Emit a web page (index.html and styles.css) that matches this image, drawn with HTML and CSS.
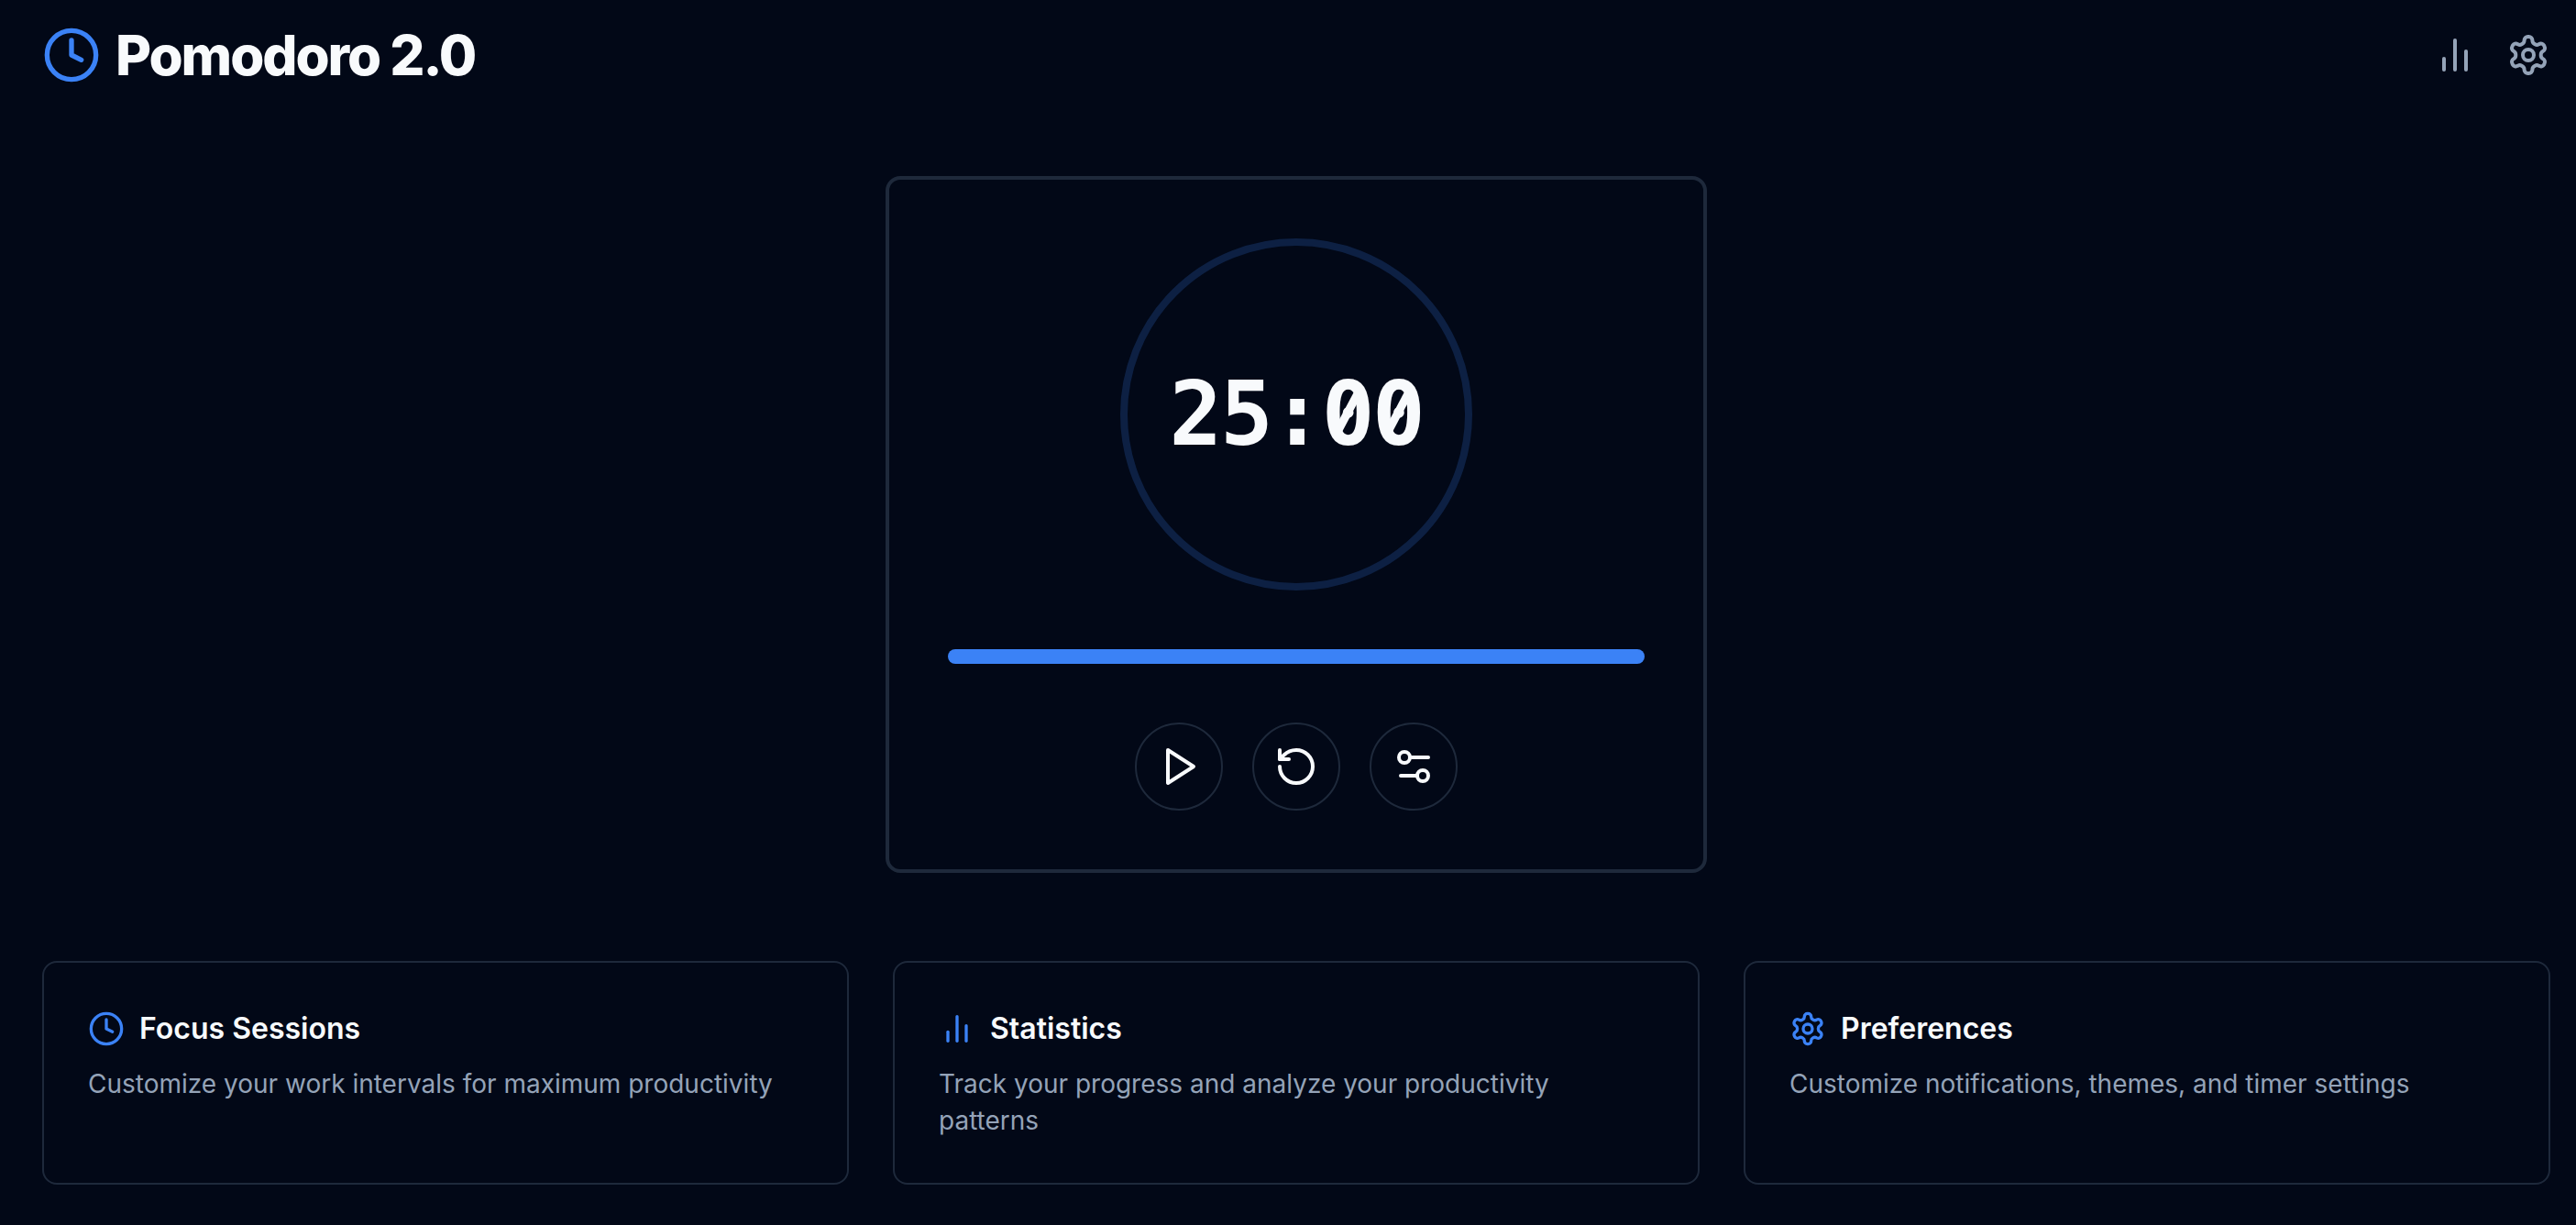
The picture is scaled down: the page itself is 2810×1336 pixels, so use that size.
FILE: index.html
```html
<!DOCTYPE html>
<html lang="en">
<head>
<meta charset="utf-8">
<title>Pomodoro 2.0</title>
<link rel="stylesheet" href="styles.css">
</head>
<body>
<svg class="sprite" width="0" height="0" aria-hidden="true">
  <symbol id="i-clock" viewBox="0 0 24 24"><circle cx="12" cy="12" r="10"/><polyline points="12 6 12 12 16 14"/></symbol>
  <symbol id="i-bars" viewBox="0 0 24 24"><line x1="18" x2="18" y1="20" y2="10"/><line x1="12" x2="12" y1="20" y2="4"/><line x1="6" x2="6" y1="20" y2="14"/></symbol>
  <symbol id="i-gear" viewBox="0 0 24 24"><path d="M12.22 2h-.44a2 2 0 0 0-2 2v.18a2 2 0 0 1-1 1.73l-.43.25a2 2 0 0 1-2 0l-.15-.08a2 2 0 0 0-2.73.73l-.22.38a2 2 0 0 0 .73 2.73l.15.1a2 2 0 0 1 1 1.72v.51a2 2 0 0 1-1 1.74l-.15.09a2 2 0 0 0-.73 2.73l.22.38a2 2 0 0 0 2.73.73l.15-.08a2 2 0 0 1 2 0l.43.25a2 2 0 0 1 1 1.73V20a2 2 0 0 0 2 2h.44a2 2 0 0 0 2-2v-.18a2 2 0 0 1 1-1.73l.43-.25a2 2 0 0 1 2 0l.15.08a2 2 0 0 0 2.73-.73l.22-.39a2 2 0 0 0-.73-2.73l-.15-.08a2 2 0 0 1-1-1.74v-.5a2 2 0 0 1 1-1.74l.15-.09a2 2 0 0 0 .73-2.73l-.22-.38a2 2 0 0 0-2.73-.73l-.15.08a2 2 0 0 1-2 0l-.43-.25a2 2 0 0 1-1-1.73V4a2 2 0 0 0-2-2z"/><circle cx="12" cy="12" r="3"/></symbol>
  <symbol id="i-play" viewBox="0 0 24 24"><polygon points="6 3 20 12 6 21 6 3"/></symbol>
  <symbol id="i-reset" viewBox="0 0 24 24"><path d="M3 12a9 9 0 1 0 9-9 9.75 9.75 0 0 0-6.74 2.74L3 8"/><path d="M3 3v5h5"/></symbol>
  <symbol id="i-sliders" viewBox="0 0 24 24"><path d="M20 7h-9"/><path d="M14 17H5"/><circle cx="17" cy="17" r="3"/><circle cx="7" cy="7" r="3"/></symbol>
</svg>

<header class="topbar">
  <div class="brand">
    <svg class="icon icon-logo"><use href="#i-clock"/></svg>
    <h1 class="brand-name">Pomodoro 2.0</h1>
  </div>
  <nav class="top-actions">
    <button class="plain-btn" type="button" aria-label="Statistics"><svg class="icon icon-md icon-muted"><use href="#i-bars"/></svg></button>
    <button class="plain-btn" type="button" aria-label="Settings"><svg class="icon icon-md icon-muted"><use href="#i-gear"/></svg></button>
  </nav>
</header>

<main class="content">
  <section class="timer-card">
    <div class="dial"><span class="time">25:<span class="zero">0</span><span class="zero">0</span></span></div>
    <div class="progress"></div>
    <div class="controls">
      <button class="round-btn" type="button" aria-label="Start"><svg class="icon icon-md"><use href="#i-play"/></svg></button>
      <button class="round-btn" type="button" aria-label="Reset"><svg class="icon icon-md"><use href="#i-reset"/></svg></button>
      <button class="round-btn" type="button" aria-label="Adjust"><svg class="icon icon-md"><use href="#i-sliders"/></svg></button>
    </div>
  </section>

  <section class="features">
    <article class="feature">
      <div class="feature-head"><svg class="icon icon-sm icon-blue"><use href="#i-clock"/></svg><h2 class="feature-title">Focus Sessions</h2></div>
      <p class="feature-text">Customize your work intervals for maximum productivity</p>
    </article>
    <article class="feature">
      <div class="feature-head"><svg class="icon icon-sm icon-blue"><use href="#i-bars"/></svg><h2 class="feature-title">Statistics</h2></div>
      <p class="feature-text">Track your progress and analyze your productivity patterns</p>
    </article>
    <article class="feature">
      <div class="feature-head"><svg class="icon icon-sm icon-blue"><use href="#i-gear"/></svg><h2 class="feature-title">Preferences</h2></div>
      <p class="feature-text">Customize notifications, themes, and timer settings</p>
    </article>
  </section>
</main>
</body>
</html>
```

FILE: styles.css
```css
* { box-sizing: border-box; }

html, body { margin: 0; background: #020817; }

body {
  min-height: 1336px;
  padding: 24px 28px 44px 46px;
  color: #f8fafc;
  font-family: Inter, "Liberation Sans", sans-serif;
  overflow: hidden;
}

.sprite { position: absolute; }

.icon {
  display: block;
  flex: none;
  fill: none;
  stroke: currentColor;
  stroke-width: 2;
  stroke-linecap: round;
  stroke-linejoin: round;
}

.icon-logo { width: 64px; height: 64px; color: #3b82f6; }
.icon-md { width: 48px; height: 48px; }
.icon-sm { width: 40px; height: 40px; }
.icon-muted { color: #94a3b8; }
.icon-blue { color: #3b82f6; }

.topbar {
  display: flex;
  align-items: center;
  justify-content: space-between;
  height: 72px;
}

.brand { display: flex; align-items: center; gap: 16px; }

.brand-name {
  margin: 0;
  font-size: 60px;
  line-height: 72px;
  font-weight: 800;
  letter-spacing: -2.05px;
}

.top-actions { display: flex; gap: 32px; }

.plain-btn, .round-btn {
  display: flex;
  align-items: center;
  justify-content: center;
  padding: 0;
  background: transparent;
  color: inherit;
  border: 0;
}

.content { padding-top: 96px; }

.timer-card {
  display: flex;
  flex-direction: column;
  align-items: center;
  gap: 64px;
  width: 896px;
  margin: 0 auto;
  padding: 64px;
  border: 4px solid #1e293b;
  border-radius: 16px;
}

.dial {
  display: flex;
  align-items: center;
  justify-content: center;
  width: 384px;
  height: 384px;
  border: 8px solid rgba(59, 130, 246, 0.2);
  border-radius: 50%;
}

.time {
  font-family: "DejaVu Sans Mono", monospace;
  font-size: 96px;
  line-height: 96px;
  font-weight: 700;
  letter-spacing: -2.4px;
}

.zero { position: relative; }

.zero::after {
  content: "";
  position: absolute;
  left: 27px;
  top: 50%;
  width: 9px;
  height: 50px;
  background: currentColor;
  transform: translate(-50%, -50%) rotate(28deg);
}

.progress {
  width: 100%;
  height: 16px;
  border-radius: 8px;
  background: #3b82f6;
}

.controls { display: flex; gap: 32px; }

.round-btn {
  width: 96px;
  height: 96px;
  border: 2px solid #1e293b;
  border-radius: 50%;
}

.features {
  display: grid;
  grid-template-columns: repeat(3, 1fr);
  gap: 48px;
  margin-top: 96px;
}

.feature {
  padding: 48px;
  border: 2px solid #1e293b;
  border-radius: 16px;
}

.feature-head { display: flex; align-items: center; gap: 16px; margin-bottom: 16px; }

.feature-title {
  margin: 0;
  font-size: 32px;
  line-height: 48px;
  font-weight: 600;
}

.feature-text {
  margin: 0;
  font-size: 28px;
  line-height: 40px;
  color: #94a3b8;
}
```
